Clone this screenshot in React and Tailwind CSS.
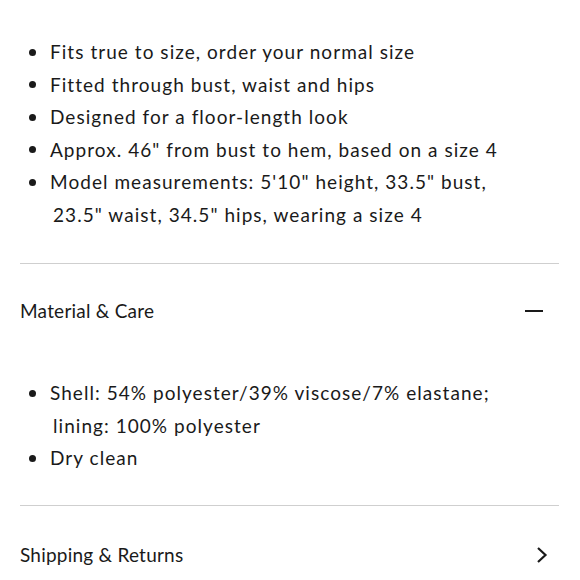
export default function App() {
  const font = { fontFamily: 'Lato, "Noto Sans", sans-serif' };
  const Bullet = ({ lines }) => (
    <li className="flex">
      <span className="w-[30px] shrink-0 flex">
        <span className="mt-[12.5px] ml-[9px] w-[7px] h-[7px] rounded-full bg-[#1a1a1a]" />
      </span>
      <div>
        {lines.map((l, i) => (
          <div key={i} className={i > 0 ? "pl-[3px]" : ""}>{l}</div>
        ))}
      </div>
    </li>
  );
  return (
    <div className="w-[580px] h-[580px] bg-white overflow-hidden text-[#1a1a1a]" style={font}>
      <div className="pl-[20px] pr-[21px]">
        <ul className="pt-[36px] text-[19px] leading-[32.6px] tracking-[0.055em]">
          <Bullet lines={["Fits true to size, order your normal size"]} />
          <Bullet lines={["Fitted through bust, waist and hips"]} />
          <Bullet lines={["Designed for a floor-length look"]} />
          <Bullet lines={['Approx. 46" from bust to hem, based on a size 4']} />
          <Bullet lines={['Model measurements: 5\'10" height, 33.5" bust,', '23.5" waist, 34.5" hips, wearing a size 4']} />
        </ul>
        <div className="mt-[31px] h-[1.5px] bg-[#cfcfcf]" />
        <div className="mt-[35px] flex items-center justify-between h-[24px]">
          <span className="text-[19px] tracking-[0.012em]">Material &amp; Care</span>
          <span className="mr-[16px] w-[18px] h-[2px] bg-[#1a1a1a]" />
        </div>
        <ul className="mt-[54px] text-[19px] leading-[32.6px] tracking-[0.055em]">
          <Bullet lines={["Shell: 54% polyester/39% viscose/7% elastane;", "lining: 100% polyester"]} />
          <Bullet lines={["Dry clean"]} />
        </ul>
        <div className="mt-[30px] h-[1.5px] bg-[#cfcfcf]" />
        <div className="mt-[37px] flex items-center justify-between h-[24px]">
          <span className="text-[19px] tracking-[0.012em]">Shipping &amp; Returns</span>
          <svg width="12" height="18" viewBox="0 0 12 18" className="mr-[11px]">
            <path d="M2 2 L9.5 9 L2 16" fill="none" stroke="#1a1a1a" strokeWidth="2.2" />
          </svg>
        </div>
      </div>
    </div>
  );
}
